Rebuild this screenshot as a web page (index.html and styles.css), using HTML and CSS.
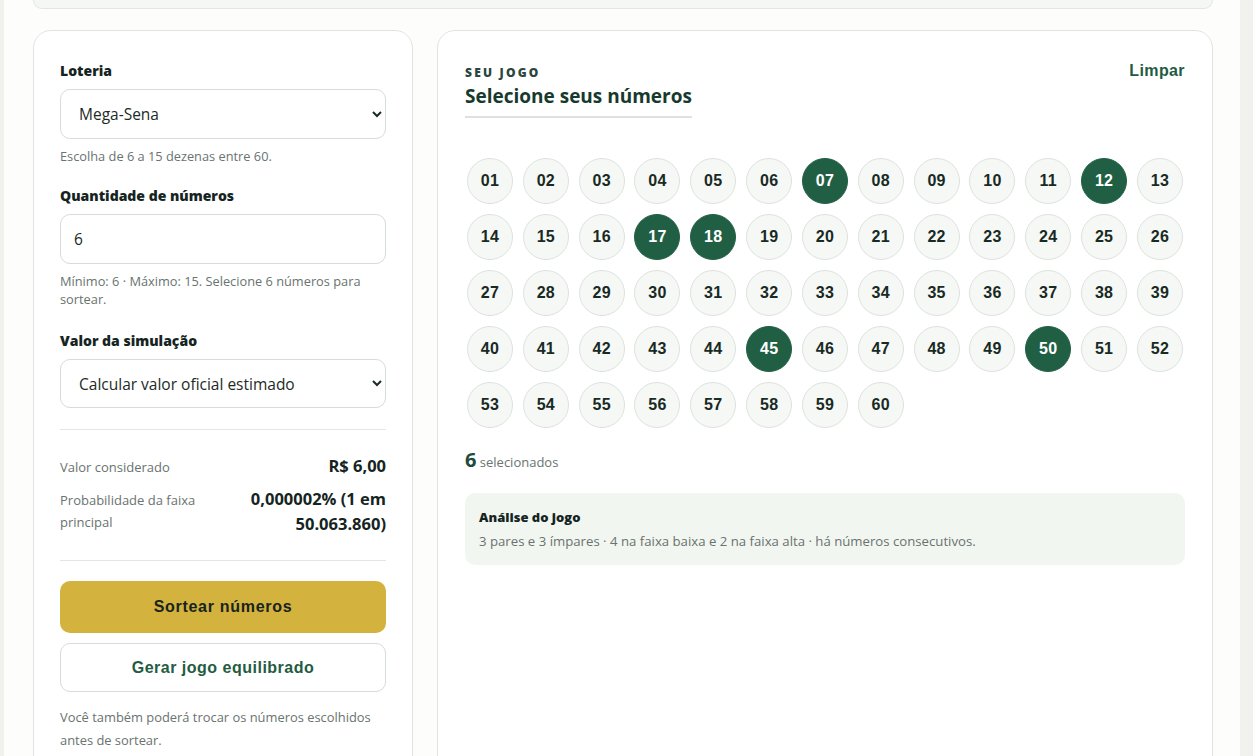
FILE: index.html
```html
<!DOCTYPE html>
<html lang="pt-BR">
<head>
    <meta charset="UTF-8">
    <meta name="viewport" content="width=device-width, initial-scale=1.0">
    <title>Simulador de Loteria</title>
    <link rel="stylesheet" href="styles.css">
</head>
<body>
    <div class="page">
        <div class="summary-bar"></div>

        <div class="layout">
            <aside class="panel settings">
                <div class="field">
                    <label for="lottery">Loteria</label>
                    <select id="lottery">
                        <option>Mega-Sena</option>
                        <option>Lotofácil</option>
                        <option>Quina</option>
                    </select>
                    <p class="hint">Escolha de 6 a 15 dezenas entre 60.</p>
                </div>

                <div class="field spaced">
                    <label for="amount">Quantidade de números</label>
                    <input type="text" id="amount" value="6">
                    <p class="hint">Mínimo: 6 · Máximo: 15. Selecione 6 números para sortear.</p>
                </div>

                <div class="field">
                    <label for="price">Valor da simulação</label>
                    <select id="price" class="short">
                        <option>Calcular valor oficial estimado</option>
                        <option>Informar valor manualmente</option>
                    </select>
                </div>

                <div class="stats">
                    <div class="stat-row">
                        <span class="stat-label">Valor considerado</span>
                        <strong class="stat-value">R$ 6,00</strong>
                    </div>
                    <div class="stat-row">
                        <span class="stat-label">Probabilidade da faixa principal</span>
                        <strong class="stat-value">0,000002% (1 em 50.063.860)</strong>
                    </div>
                </div>

                <button class="btn btn-primary">Sortear números</button>
                <button class="btn btn-outline">Gerar jogo equilibrado</button>
                <p class="note">Você também poderá trocar os números escolhidos antes de sortear.</p>
            </aside>

            <section class="panel game">
                <div class="game-head">
                    <div class="game-title">
                        <span class="eyebrow">Seu jogo</span>
                        <h2>Selecione seus números</h2>
                    </div>
                    <button class="link-btn">Limpar</button>
                </div>

                <div class="balls" id="balls"></div>

                <p class="count"><strong id="count">6</strong> selecionados</p>

                <div class="analysis">
                    <h3>Análise do jogo</h3>
                    <p>3 pares e 3 ímpares · 4 na faixa baixa e 2 na faixa alta · há números consecutivos.</p>
                </div>
            </section>
        </div>
    </div>

    <script>
        let picked = [7, 12, 17, 18, 45, 50];
        let grid = document.getElementById("balls");

        for (let i = 1; i <= 60; i++) {
            let ball = document.createElement("button");
            ball.className = "ball";
            if (picked.includes(i)) {
                ball.classList.add("selected");
            }
            ball.innerText = String(i).padStart(2, "0");
            ball.onclick = function () {
                ball.classList.toggle("selected");
                document.getElementById("count").innerText =
                    grid.querySelectorAll(".selected").length;
            };
            grid.appendChild(ball);
        }
    </script>
</body>
</html>
```

FILE: styles.css
```css
body {
    margin: 0;
    padding: 0;
    background-color: #f1f2ee;
    font-family: "Open Sans", "Noto Sans", sans-serif;
    color: #1c2b26;
    overflow: hidden;
}
.page {
    width: 1236px;
    min-height: 800px;
    margin-left: 4px;
    background: #fdfdfc;
    padding: 0 27px 0 29px;
    box-sizing: border-box;
}
.summary-bar {
    height: 8px;
    background: #f4f7f3;
    border: 1px solid #e2e7e1;
    border-top: none;
    border-radius: 0 0 14px 14px;
}
.layout {
    display: grid;
    grid-template-columns: 380px 1fr;
    gap: 24px;
    margin-top: 21px;
}
.panel {
    background: #fff;
    border: 1px solid #e1e5e2;
    border-radius: 18px;
    box-sizing: border-box;
    min-height: 760px;
}
.settings {
    padding: 30px 26px 8px;
}
.field {
    margin-bottom: 21px;
}
.field.spaced {
    margin-bottom: 23px;
}
.field label {
    display: block;
    font-size: 14px;
    font-weight: 800;
    color: #15241f;
    margin-bottom: 9px;
}
select, input[type="text"] {
    width: 100%;
    box-sizing: border-box;
    height: 50px;
    border: 1px solid #d5dcd9;
    border-radius: 10px;
    background: #fff;
    font-family: inherit;
    font-size: 15.5px;
    color: #1c2b26;
    padding: 0 12px 0 14px;
}
select.short {
    height: 49px;
}
input[type="text"] {
    padding-left: 13px;
}
.hint {
    margin: 8px 0 0;
    font-size: 12.8px;
    line-height: 18px;
    color: #69736f;
}
.stats {
    border-top: 1px solid #e2e7e4;
    border-bottom: 1px solid #e2e7e4;
    margin-top: 21px;
    padding: 23px 0 16px;
    margin-bottom: 20px;
}
.stat-row {
    display: flex;
    justify-content: space-between;
    align-items: baseline;
    gap: 16px;
    margin-bottom: 8px;
}
.stat-label {
    font-size: 13px;
    line-height: 22px;
    color: #69736f;
    max-width: 160px;
}
.stat-value {
    font-size: 16.5px;
    line-height: 25px;
    font-weight: 700;
    text-align: right;
    color: #15241f;
    max-width: 150px;
}
.btn {
    display: block;
    width: 100%;
    border-radius: 10px;
    font-family: "Liberation Sans", Arial, sans-serif;
    font-weight: 700;
    font-size: 16px;
    letter-spacing: 0.5px;
    cursor: pointer;
}
.btn-primary {
    height: 52px;
    background: #d3b23e;
    border: none;
    color: #17241f;
    letter-spacing: 0.7px;
}
.btn-outline {
    height: 49px;
    margin-top: 10px;
    background: #fff;
    border: 1px solid #d5dcd9;
    color: #1f5c42;
}
.note {
    margin: 14px 0 0;
    font-size: 12.9px;
    line-height: 23px;
    color: #69736f;
}
.game {
    padding: 33px 27px 40px;
}
.game-head {
    display: flex;
    justify-content: space-between;
    align-items: flex-start;
}
.game-title {
    border-bottom: 2px solid #dde3dc;
    padding-bottom: 7px;
}
.eyebrow {
    display: block;
    font-size: 12px;
    font-weight: 800;
    letter-spacing: 2.2px;
    text-transform: uppercase;
    color: #2b463d;
}
.game-title h2 {
    margin: 2px 0 0;
    font-size: 19px;
    font-weight: 700;
    color: #163a2d;
}
.link-btn {
    margin-top: -2px;
    border: none;
    background: none;
    padding: 0;
    font-family: "Liberation Sans", Arial, sans-serif;
    font-weight: 700;
    font-size: 16px;
    letter-spacing: 0.4px;
    color: #1f5c42;
    cursor: pointer;
}
.balls {
    display: grid;
    grid-template-columns: repeat(13, 46px);
    justify-content: space-between;
    row-gap: 10px;
    margin-top: 40px;
    padding: 0 2px 0 2px;
}
.ball {
    width: 46px;
    height: 46px;
    border-radius: 50%;
    border: 1px solid #dde2de;
    background: #f6f8f5;
    font-family: "Liberation Sans", Arial, sans-serif;
    font-weight: 700;
    font-size: 16px;
    letter-spacing: 0.3px;
    color: #182a24;
    padding: 0;
    cursor: pointer;
}
.ball.selected {
    background: #215f44;
    border-color: #215f44;
    color: #fff;
}
.count {
    margin: 18px 0 0;
    font-size: 13px;
    color: #69736f;
}
.count strong {
    font-size: 20px;
    color: #1f4b3a;
}
.analysis {
    margin-top: 20px;
    background: #f2f6f1;
    border-radius: 10px;
    padding: 15px 14px 15px;
}
.analysis h3 {
    margin: 0;
    font-size: 13px;
    font-weight: 800;
    color: #15241f;
}
.analysis p {
    margin: 6px 0 0;
    font-size: 13.2px;
    color: #69736f;
}
```
